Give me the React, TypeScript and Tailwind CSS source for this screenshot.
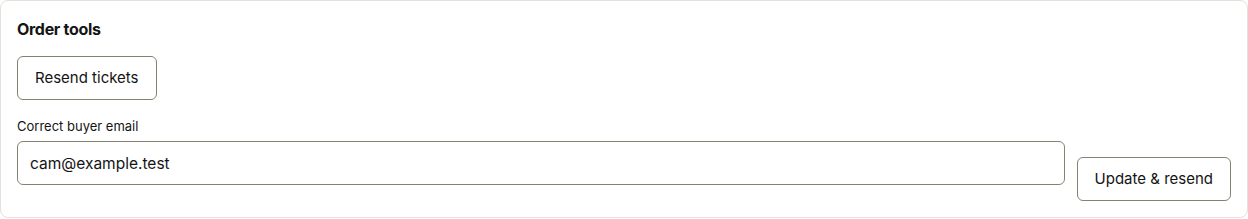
export default function App() {
  return (
    <div className="w-[1248px] bg-white p-0 font-['Inter',sans-serif] text-[#141414]">
      <section className="h-[218px] rounded-lg border border-[#e3e1d9] bg-white px-4 pt-4">
        <h2 className="text-base leading-6 font-bold tracking-[-0.3px]">Order tools</h2>

        <button
          type="button"
          className="mt-[15px] h-11 rounded-md border border-[#858173] bg-white px-[17px] text-[15px] leading-5"
        >
          Resend tickets
        </button>

        <div className="mt-4 flex items-end gap-3">
          <div className="flex flex-1 flex-col pb-4">
            <label className="mb-[5px] text-[13px] leading-5">Correct buyer email</label>
            <input
              defaultValue="cam@example.test"
              className="h-11 rounded-md border border-[#858173] bg-white px-3 text-[15.5px] outline-none"
            />
          </div>
          <button
            type="button"
            className="h-11 rounded-md border border-[#858173] bg-white px-[17px] text-[15px] leading-5"
          >
            Update &amp; resend
          </button>
        </div>
      </section>
    </div>
  );
}
